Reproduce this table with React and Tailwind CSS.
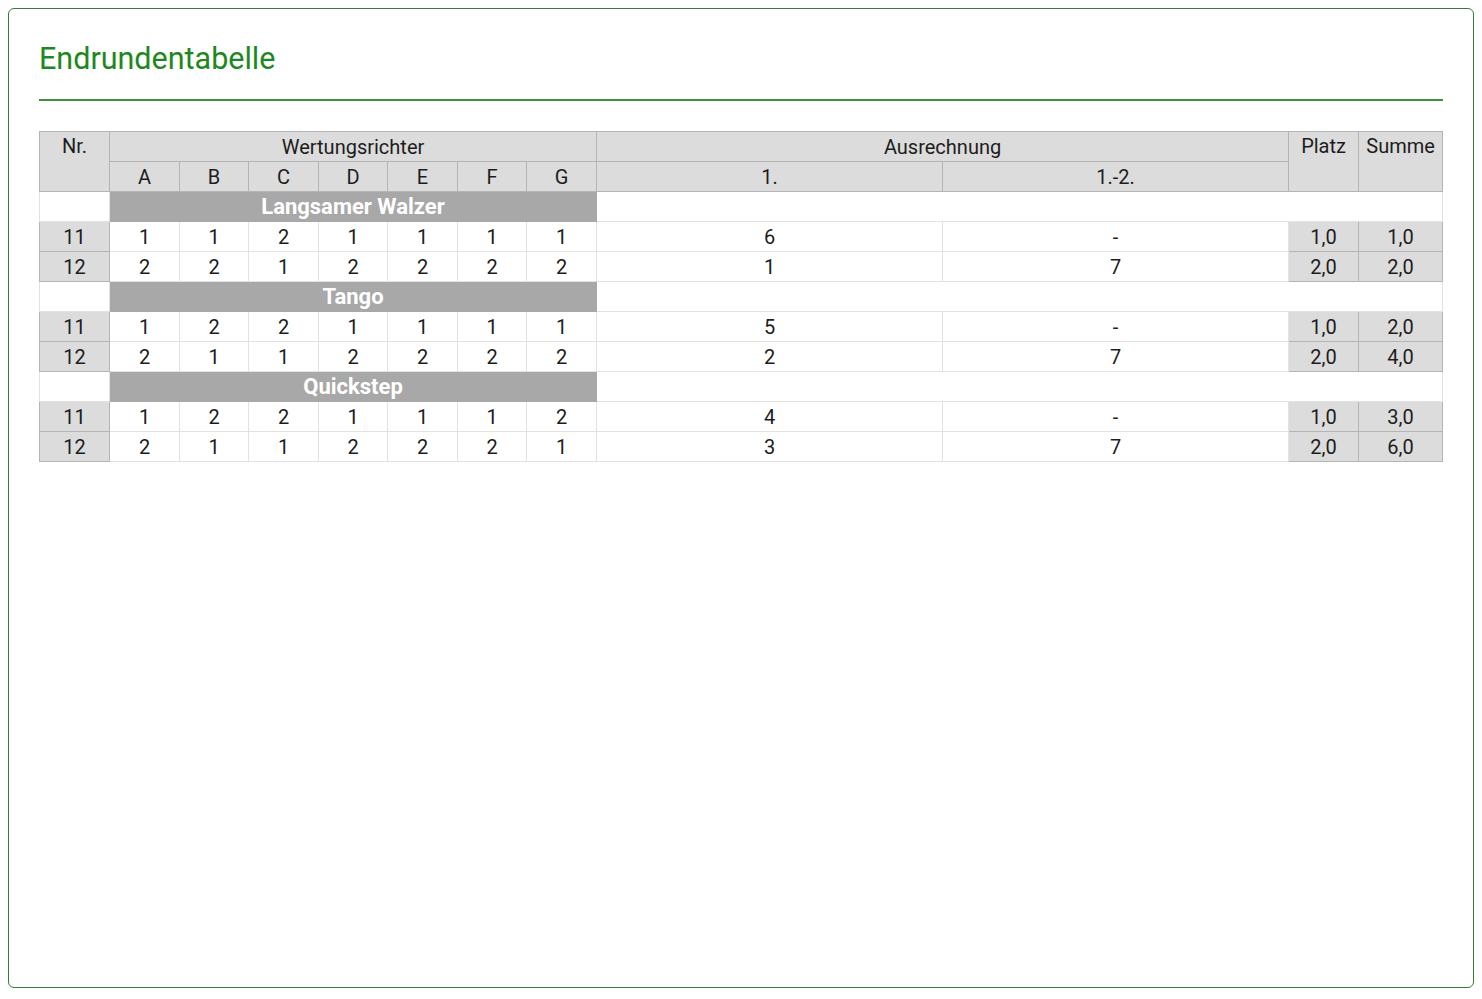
const dances = [
  {
    name: "Langsamer Walzer",
    rows: [
      { nr: "11", marks: ["1", "1", "2", "1", "1", "1", "1"], a1: "6", a2: "-", platz: "1,0", summe: "1,0" },
      { nr: "12", marks: ["2", "2", "1", "2", "2", "2", "2"], a1: "1", a2: "7", platz: "2,0", summe: "2,0" },
    ],
  },
  {
    name: "Tango",
    rows: [
      { nr: "11", marks: ["1", "2", "2", "1", "1", "1", "1"], a1: "5", a2: "-", platz: "1,0", summe: "2,0" },
      { nr: "12", marks: ["2", "1", "1", "2", "2", "2", "2"], a1: "2", a2: "7", platz: "2,0", summe: "4,0" },
    ],
  },
  {
    name: "Quickstep",
    rows: [
      { nr: "11", marks: ["1", "2", "2", "1", "1", "1", "2"], a1: "4", a2: "-", platz: "1,0", summe: "3,0" },
      { nr: "12", marks: ["2", "1", "1", "2", "2", "2", "1"], a1: "3", a2: "7", platz: "2,0", summe: "6,0" },
    ],
  },
];

const judges = ["A", "B", "C", "D", "E", "F", "G"];
const judgeWidths = ["w-[70px]", "w-[69px]", "w-[70px]", "w-[69px]", "w-[70px]", "w-[69px]", "w-[70px]"];

const head = "border border-[#b4b4b4] bg-[#dcdcdc] font-normal h-[30px] p-0 text-center";
const gray = "border border-[#b4b4b4] bg-[#dcdcdc] h-[30px] p-0 text-center";
const white = "border border-[#e2e2e2] bg-white h-[30px] p-0 text-center";

function App() {
  return (
    <div className="w-full h-screen bg-white" style={{ fontFamily: "Roboto, 'Liberation Sans', sans-serif" }}>
      <div className="m-2 h-[980px] border border-[#3a7a3a] rounded-md px-[30px] pt-8">
        <h1 className="text-[30.5px] leading-[36px] text-[#1e881e] font-normal">Endrundentabelle</h1>
        <div className="mt-[22px] h-[2px] bg-[#3f8f3f]" />

        <table className="mt-[30px] w-[1403px] table-fixed border-collapse text-[20px] leading-[28px] text-[#1c1c1c]">
          <colgroup>
            <col className="w-[70px]" />
            {judgeWidths.map((w, i) => (
              <col key={i} className={w} />
            ))}
            <col className="w-[346px]" />
            <col className="w-[346px]" />
            <col className="w-[70px]" />
            <col className="w-[84px]" />
          </colgroup>
          <thead>
            <tr>
              <th rowSpan={2} className={head + " align-top"}>Nr.</th>
              <th colSpan={7} className={head}>Wertungsrichter</th>
              <th colSpan={2} className={head}>Ausrechnung</th>
              <th rowSpan={2} className={head + " align-top"}>Platz</th>
              <th rowSpan={2} className={head + " align-top"}>Summe</th>
            </tr>
            <tr>
              {judges.map((j) => (
                <th key={j} className={head}>{j}</th>
              ))}
              <th className={head}>1.</th>
              <th className={head}>1.-2.</th>
            </tr>
          </thead>
          <tbody>
            {dances.map((d) => [
              <tr key={d.name}>
                <td className={white}></td>
                <td colSpan={7} className="border border-[#a8a8a8] bg-[#a8a8a8] h-[30px] p-0 text-center text-white font-bold text-[22px]">
                  {d.name}
                </td>
                <td colSpan={4} className={white}></td>
              </tr>,
              ...d.rows.map((r) => (
                <tr key={d.name + r.nr}>
                  <td className={gray}>{r.nr}</td>
                  {r.marks.map((m, i) => (
                    <td key={i} className={white}>{m}</td>
                  ))}
                  <td className={white}>{r.a1}</td>
                  <td className={white}>{r.a2}</td>
                  <td className={gray}>{r.platz}</td>
                  <td className={gray}>{r.summe}</td>
                </tr>
              )),
            ])}
          </tbody>
        </table>
      </div>
    </div>
  );
}

export default App;
